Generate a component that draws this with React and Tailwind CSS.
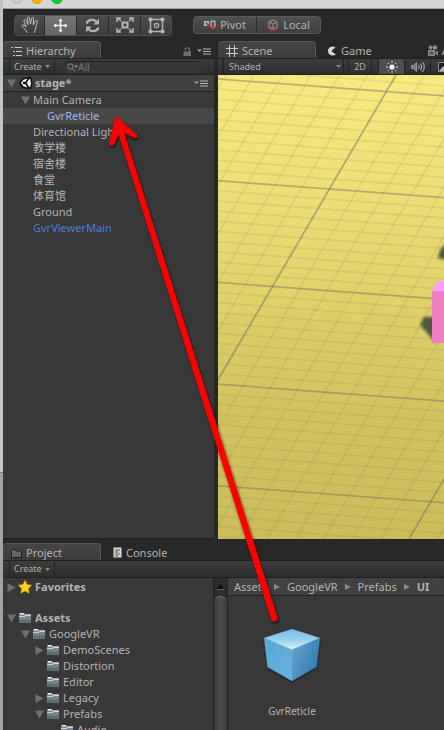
import React from "react";

function Caret({ className = "" }) {
  return (
    <svg viewBox="0 0 5 3" className={`h-[3px] w-[5px] shrink-0 fill-[#8a8a8a] ${className}`} aria-hidden="true">
      <path d="M0 0h5L2.500 3z" />
    </svg>
  );
}

function PaneMenu() {
  return (
    <button type="button" aria-label="Pane menu" className="shrink-0">
      <svg viewBox="0 0 14 7" className="h-[7px] w-[14px]" aria-hidden="true">
        <path d="M0 1.500h5L2.500 4z" fill="#a5a5a5" />
        <path d="M6 1h8M6 3.500h8M6 6h8" stroke="#b4b4b4" strokeWidth="1" />
      </svg>
    </button>
  );
}

function Fold({ open }) {
  return (
    <svg viewBox="0 0 9 9" className="h-[9px] w-[9px] shrink-0 fill-[#6f6f6f]" aria-hidden="true">
      <path d={open ? "M0 .5h9L4.500 8.500z" : "M.5 0v9l8-4.500z"} />
    </svg>
  );
}

function HandIcon() {
  return (
    <svg viewBox="0 0 18 18" className="h-[18px] w-[18px]" fill="none" stroke="#c0c0c0" strokeWidth="1" strokeLinejoin="round" strokeLinecap="round">
      <path d="M6.200 16.500C4.600 14 3.200 12.200 1.300 10.600c-.9-1.100.5-2.300 1.700-1.500l2.200 1.500L2.800 5.200c-.4-1.300 1.300-2 2-.7l2.400 4L6.300 2.300c-.1-1.400 1.900-1.600 2.200-.2l1 5.900 1-5.700c.4-1.300 2.200-1 2.100.4l-.5 6 2.600-3.900c.8-1.100 2.300-.3 1.800 1-1.200 3-1.700 5-2 7.200-.2 1.500-.9 2.400-1.100 3.500" />
    </svg>
  );
}

function MoveIcon() {
  return (
    <svg viewBox="0 0 15 15" className="h-[15px] w-[15px]" fill="#f4f4f4" stroke="#333" strokeWidth=".4">
      <path d="M7.500 0l3 3.500H8.600v2.900h2.900V4.500l3.500 3-3.500 3V8.600H8.600v2.900h1.900l-3 3.500-3-3.500h1.900V8.600H3.500v1.900L0 7.500l3.500-3v1.900h2.900V3.500H4.500z" />
    </svg>
  );
}

function RotateIcon() {
  return (
    <svg viewBox="0 0 15 15" className="h-[15px] w-[15px]">
      <g fill="none" stroke="#b4b4b4" strokeWidth="2.200">
        <path d="M1.500 5.500C3.200 1.300 8.500.8 11.500 3.800" />
        <path d="M13.500 9.500C11.800 13.700 6.500 14.200 3.500 11.200" />
      </g>
      <path d="M14 .8v5.700H8.300zM1 14.200V8.500h5.700z" fill="#b4b4b4" />
    </svg>
  );
}

function ScaleIcon() {
  return (
    <svg viewBox="0 0 18 16" className="h-4 w-[18px]" stroke="#b8b8b8" fill="none">
      <rect x="6.500" y="5.500" width="5" height="5" strokeWidth="2" />
      <path d="M1.500 1l3.500 3M16.500 1l-3.500 3M1.500 15l3.500-3M16.500 15l-3.500-3" strokeWidth="1.500" />
      <path d="M1 5V1h4M13 1h4v4M1 11v4h4M13 15h4v-4" strokeWidth="1.500" />
    </svg>
  );
}

function RectIcon() {
  return (
    <svg viewBox="0 0 17 17" className="h-[17px] w-[17px]" fill="none" stroke="#b0b0b0">
      <rect x="2.500" y="2.500" width="12" height="12" strokeWidth="1.500" />
      <g fill="#b8b8b8" stroke="none">
        <circle cx="2.500" cy="2.500" r="2.100" />
        <circle cx="14.500" cy="2.500" r="2.100" />
        <circle cx="2.500" cy="14.500" r="2.100" />
        <circle cx="14.500" cy="14.500" r="2.100" />
      </g>
      <circle cx="8.500" cy="8.500" r="2.200" strokeWidth="1.200" />
      <circle cx="8.500" cy="8.500" r=".6" fill="#b8b8b8" stroke="none" />
    </svg>
  );
}

function PivotIcon() {
  return (
    <svg viewBox="0 0 12 10" className="h-[10px] w-3 shrink-0">
      <path d="M0 1h5v5H0z" fill="#bdbdbd" />
      <path d="M1.500 2.500h2v2h-2z" fill="#555" />
      <path d="M7 1h4v6H7z" fill="#555" stroke="#d0d0d0" />
      <circle cx="4" cy="5" r="1.400" fill="#d8333f" />
      <circle cx="9" cy="7.500" r="2" fill="#d8333f" />
    </svg>
  );
}

function LocalIcon() {
  return (
    <svg viewBox="0 0 12 12" className="h-3 w-3 shrink-0" fill="none">
      <path d="M2 3l4-2 4 2v5l-4 2-4-2zM2 3l4 2 4-2M6 5v5" stroke="#8c8c8c" strokeWidth="1.200" />
      <path d="M1 8.500c1.500 3.200 8.500 3.200 10 0" stroke="#c8303b" strokeWidth="1.500" />
    </svg>
  );
}

function HierarchyIcon() {
  return (
    <svg viewBox="0 0 11 9" className="h-[9px] w-[11px] shrink-0" stroke="#c8c8c8">
      <path d="M0 .5h2M3.500 .5H11M2 4.500h2M5 4.500h6M2 8.500h2M5 8.500h6" />
    </svg>
  );
}

function GridIcon() {
  return (
    <svg viewBox="0 0 12 12" className="h-3 w-3 shrink-0" stroke="#cdcdcd">
      <path d="M3.500 0v12M8.500 0v12M0 3.500h12M0 8.500h12" />
    </svg>
  );
}

function GameIcon() {
  return (
    <svg viewBox="0 0 10 10" className="h-[10px] w-[10px] shrink-0" fill="#d6d6d6">
      <path d="M8.500 1.500A4.600 4.600 0 1 0 8.800 8.200L5 5.700V4.300z" />
    </svg>
  );
}

function CameraIcon() {
  return (
    <svg viewBox="0 0 10 12" className="h-3 w-[10px] shrink-0" fill="#8d8d8d">
      <circle cx="2.600" cy="2.600" r="2" />
      <circle cx="7" cy="2.400" r="2.200" />
      <path d="M0 5h7v6H0zM7.500 7L10 5.500v5L7.500 9z" />
      <path d="M1.500 6.500h4v3h-4z" fill="#555" />
    </svg>
  );
}

function LockIcon() {
  return (
    <svg viewBox="0 0 8 9" className="h-[9px] w-2 shrink-0">
      <path d="M2 3V2.500C2 .2 6.500.2 6.500 2.500V5" fill="none" stroke="#6f6f6f" strokeWidth="1.200" />
      <path d="M.5 4.500H8V9H.5z" fill="#6f6f6f" />
    </svg>
  );
}

function UnityIcon() {
  return (
    <svg viewBox="0 0 14 14" className="h-[14px] w-[14px] shrink-0">
      <path d="M0 7l3.500-5.200L12 .4 13.600 7 12 13.600 3.500 12.200z" fill="#141414" />
      <path d="M6.500 5.800L8.300 2.600 4.400 3.700 2 7l2.400 3.300 3.900 1.100-1.800-3.200H4.400L3.600 7l.8-1.200z" fill="#f4f4f4" />
      <path d="M7.800 7l2-3.400 1.300-.9L12 7l-.9 4.300-1.300-.9z" fill="#f4f4f4" />
    </svg>
  );
}

function Folder() {
  return (
    <svg viewBox="0 0 14 12" className="h-3 w-[14px] shrink-0">
      <path d="M.5 2.500h1V.5h5v1h6.500l.5 1v9H.5z" fill="#77868a" stroke="#262b2c" strokeWidth=".7" />
      <path d="M1.500 1h4.500v1.500H1.500z" fill="#eee" />
      <path d="M6 3h7M1 4.500h6l1-1h5" stroke="#d5dddf" fill="none" strokeWidth=".9" />
      <path d="M1 7.500h12V11H1z" fill="#5f6f73" />
    </svg>
  );
}

function TabFolder() {
  return (
    <svg viewBox="0 0 11 9" className="h-[9px] w-[11px] shrink-0">
      <path d="M.5 8.500v-7l1-1h3l1 1.500h4.500l.5.500v6z" fill="#666" stroke="#1c1c1c" />
    </svg>
  );
}

function ConsoleIcon() {
  return (
    <svg viewBox="0 0 9 11" className="h-[11px] w-[9px] shrink-0">
      <path d="M.5.5h8v10h-8z" fill="#dadada" />
      <path d="M2 3h5M2 5h3.500M2 7h5M2 9h3.500" stroke="#444" strokeWidth=".9" />
    </svg>
  );
}

function Star() {
  return (
    <svg viewBox="0 0 14 14" className="h-[14px] w-[14px] shrink-0">
      <path d="M7 .3l2 4.300 4.800.6-3.500 3.200.9 4.800L7 10.900l-4.200 2.300.9-4.800L.2 5.200 5 4.600z" fill="#ffd51c" stroke="#e0a60a" strokeWidth=".5" />
    </svg>
  );
}

function Prefab() {
  return (
    <svg viewBox="0 0 60 58" className="h-[58px] w-[60px]" aria-hidden="true">
      <defs>
        <linearGradient id="cubeTop" x1="0" y1="0" x2="0" y2="1">
          <stop offset="0" stopColor="#79bde2" />
          <stop offset=".5" stopColor="#93d0ee" />
          <stop offset="1" stopColor="#dcf4fd" />
        </linearGradient>
        <linearGradient id="cubeLeft" x1="0" y1="0" x2="1" y2="1">
          <stop offset="0" stopColor="#5aa6d2" />
          <stop offset="1" stopColor="#66b3de" />
        </linearGradient>
        <linearGradient id="cubeRight" x1="0" y1="0" x2="1" y2=".6">
          <stop offset="0" stopColor="#6ba8ce" />
          <stop offset="1" stopColor="#2f79b1" />
        </linearGradient>
        <filter id="cubeShade" x="-20%" y="-20%" width="140%" height="140%">
          <feDropShadow dx="0" dy="1" stdDeviation="1" floodColor="#000" floodOpacity=".6" />
        </filter>
      </defs>
      <g filter="url(#cubeShade)">
        <path d="M2 11L30 22v32L5.500 40z" fill="url(#cubeLeft)" />
        <path d="M58 11L30 22v32l24.500-14z" fill="url(#cubeRight)" />
        <path d="M30 2l28 9-28 11.500L2 11z" fill="url(#cubeTop)" />
      </g>
    </svg>
  );
}

const depthLines = Array.from({ length: 62 }, (_, i) => i - 6);
const crossLines = Array.from({ length: 70 }, (_, i) => i - 8);

function SceneView() {
  return (
    <svg viewBox="0 0 226 464" preserveAspectRatio="xMinYMin slice" className="h-full w-full" role="img" aria-label="Scene view">
      <defs>
        <linearGradient id="ground" x1="0" y1="0" x2="0" y2="1">
          <stop offset="0" stopColor="#f7ea7e" />
          <stop offset=".25" stopColor="#ede076" />
          <stop offset=".5" stopColor="#ded168" />
          <stop offset=".75" stopColor="#d0c35d" />
          <stop offset="1" stopColor="#cbbd59" />
        </linearGradient>
        <filter id="soft" x="-40%" y="-40%" width="180%" height="180%">
          <feGaussianBlur stdDeviation="1.800" />
        </filter>
      </defs>
      <rect width="900" height="464" fill="url(#ground)" />
      <g stroke="#707060" fill="none">
        {depthLines.map((k) => (
          <path key={k} d={`M0 ${4 + k * 10.17}l900 67.500`} strokeWidth={k % 10 ? 1.8 : 1.7} strokeOpacity={k % 10 ? 0.12 : 0.46} />
        ))}
        {crossLines.map((k) => (
          <path key={k} d={`M${178 + k * 28.4} 0l-271 464`} strokeWidth={k % 10 ? 1.6 : 1.7} strokeOpacity={k % 10 ? 0.13 : 0.5} />
        ))}
      </g>
      <g fill="#4e5a3c" filter="url(#soft)">
        <path d="M228 168l-6 7-2 8 8 2z" />
        <path d="M206 242h12v26l-16-18z" />
      </g>
      <path d="M214 216l5-10h25v10z" fill="#fc9ff4" />
      <path d="M214 216h30v52h-30z" fill="#ef7fc1" />
    </svg>
  );
}

const tools = [
  { name: "Hand", Icon: HandIcon },
  { name: "Move", Icon: MoveIcon, active: true },
  { name: "Rotate", Icon: RotateIcon },
  { name: "Scale", Icon: ScaleIcon },
  { name: "Rect", Icon: RectIcon },
];

const objects = ["Directional Light", "教学楼", "宿舍楼", "食堂", "体育馆", "Ground"];

const folders = [
  { name: "GoogleVR", pad: "pl-[18px]", fold: "open" },
  { name: "DemoScenes", pad: "pl-8", fold: "closed" },
  { name: "Distortion", pad: "pl-8" },
  { name: "Editor", pad: "pl-8" },
  { name: "Legacy", pad: "pl-8", fold: "closed" },
  { name: "Prefabs", pad: "pl-8", fold: "open" },
  { name: "Audio", pad: "pl-[46px]" },
];

function TreeRow({ pad, fold, children }) {
  return (
    <li className={`flex h-4 shrink-0 items-center gap-0.5 ${pad}`}>
      {fold ? <Fold open={fold === "open"} /> : <span className="w-[9px]" />}
      {children}
    </li>
  );
}

function Tab({ active, className = "", children }) {
  return (
    <button
      type="button"
      role="tab"
      aria-selected={!!active}
      className={`flex h-[17px] shrink-0 items-center gap-1 pt-0.5 text-[11px] leading-4 ${
        active ? "w-[98px] rounded-t border-t border-r border-[#575757] bg-linear-to-b from-[#454545] to-[#3c3c3c] pl-2" : ""
      } ${className}`}
    >
      {children}
    </button>
  );
}

function CreateButton() {
  return (
    <button type="button" className="ml-1.5 flex h-full w-[46px] shrink-0 items-center justify-between border-x border-[#222] px-1 text-[9px]">
      Create
      <Caret />
    </button>
  );
}

const strip = "flex shrink-0 items-center border-y border-[#202020] bg-linear-to-b from-[#3d3d3d] to-[#2d2d2d]";

function DragArrow() {
  return (
    <svg viewBox="0 0 444 730" className="pointer-events-none absolute top-0 left-0 h-[730px] w-[444px]" aria-hidden="true">
      <defs>
        <filter id="arrowShade" filterUnits="userSpaceOnUse" x="80" y="90" width="230" height="560">
          <feDropShadow dx="1" dy="2" stdDeviation="1.500" floodColor="#000" floodOpacity=".7" />
        </filter>
      </defs>
      <path
        filter="url(#arrowShade)"
        fill="#ff0000"
        d="M115.300 117.500Q116.500 116 118.500 118L136.500 134.500Q138.500 138 134.500 138L124 132.500L277.400 617.500A3.300 3.300 0 0 1 271.400 620L118.500 134L114.500 143.500Q111.500 147.500 109.200 143.500Z"
      />
    </svg>
  );
}

export default function App() {
  return (
    <div className="relative flex h-screen overflow-hidden bg-[#282828] font-['Noto_Sans','Noto_Sans_CJK_SC',sans-serif] text-[11px] leading-4 text-[#b4b4b4]">
      <div className="flex w-[3px] shrink-0 flex-col">
        <div className="h-[473px] border-b border-[#777] bg-[#bfc5c3]" />
        <div className="flex-1 bg-[#a3a3a3]" />
      </div>
      <div className="flex min-w-0 flex-1 flex-col">
        <header>
          <div className="flex h-[9px] items-start gap-2 overflow-hidden border-b border-[#a09ea0] bg-[#d7d4d7] pl-2">
            <span className="-mt-2 h-3 w-3 rounded-full border border-[#b5b2b5] bg-[#cecbce]" />
            <span className="-mt-2 h-3 w-3 rounded-full border border-[#e09a10] bg-[#fdb405]" />
            <span className="-mt-2 h-3 w-3 rounded-full border border-[#12b428] bg-[#08cf37]" />
          </div>
          <div className="flex h-8 items-center gap-[21px] pl-[11px]">
            <div className="flex h-[21px] overflow-hidden rounded border border-[#505050]">
              {tools.map(({ name, Icon, active }) => (
                <button
                  key={name}
                  type="button"
                  aria-label={name}
                  className={`flex w-8 items-center justify-center border-r border-[#2c2c2c] bg-linear-to-b first:w-[30px] last:w-[30px] last:border-r-0 ${
                    active ? "from-[#757575] to-[#666]" : "from-[#4c4c4c] to-[#3c3c3c]"
                  }`}
                >
                  <Icon />
                </button>
              ))}
            </div>
            <div className="flex h-[18px] overflow-hidden rounded border border-[#5a5a5a] bg-linear-to-b from-[#505050] to-[#3e3e3e]">
              <button type="button" className="flex w-[63px] items-center justify-center gap-1 border-r border-[#2c2c2c]">
                <PivotIcon />
                Pivot
              </button>
              <button type="button" className="flex w-[63px] items-center justify-center gap-1">
                <LocalIcon />
                Local
              </button>
            </div>
          </div>
        </header>

        <div className="flex min-h-0 flex-1">
          <section className="mr-1 flex w-[211px] shrink-0 flex-col border-b border-[#1f1f1f]">
            <div className="flex items-center" role="tablist">
              <Tab active>
                <HierarchyIcon />
                Hierarchy
              </Tab>
              <div className="ml-auto flex items-center gap-1.5 pt-1 pr-[3px]">
                <LockIcon />
                <PaneMenu />
              </div>
            </div>
            <div className={`${strip} h-[17px]`}>
              <CreateButton />
              <label className="mr-3 ml-2 flex h-3 min-w-0 flex-1 items-center rounded-full border-t border-[#202020] bg-[#373737] pl-1">
                <svg viewBox="0 0 11 9" className="h-[9px] w-[11px] shrink-0" fill="none" stroke="#8b8b8b">
                  <circle cx="3.500" cy="3.500" r="2.600" />
                  <path d="M5.500 5.500L8 8.500" />
                  <path d="M7 2.500h4L9 5z" fill="#8b8b8b" stroke="none" />
                </svg>
                <input type="search" aria-label="Search hierarchy" placeholder="All" className="h-3 w-full min-w-0 bg-transparent text-[10px] leading-3 outline-none placeholder:text-[#777]" />
              </label>
            </div>
            <div className="flex h-[17px] shrink-0 items-center border-b border-[#222] bg-[#404040] pr-1.5 pl-1">
              <Fold open />
              <span className="ml-[3px] flex items-center gap-0.5 font-bold">
                <UnityIcon />
                stage*
              </span>
              <span className="ml-auto flex">
                <PaneMenu />
              </span>
            </div>
            <ul className="min-h-0 flex-1 overflow-hidden bg-[#383838]">
              <TreeRow pad="pl-[18px]" fold="open">
                <span className="pl-px">Main Camera</span>
              </TreeRow>
              <li className="flex h-4 items-center bg-[#484848] pl-11 text-[#a0b4f4]">GvrReticle</li>
              {objects.map((name) => (
                <li key={name} className="flex h-4 items-center pl-[30px] whitespace-nowrap">
                  {name}
                </li>
              ))}
              <li className="flex h-4 items-center pl-[30px] text-[#4b7fd8]">GvrViewerMain</li>
            </ul>
          </section>

          <section className="flex min-w-0 flex-1 flex-col">
            <div className="flex overflow-hidden" role="tablist">
              <Tab active>
                <GridIcon />
                Scene
              </Tab>
              <Tab className="ml-[11px]">
                <GameIcon />
                Game
              </Tab>
              <Tab className="ml-14">
                <CameraIcon />
                A
              </Tab>
            </div>
            <div className={`${strip} h-[17px] overflow-hidden text-[9px]`}>
              <div className="ml-[5px] flex h-full w-[121px] shrink-0 items-center border-x border-[#222] pr-0.5">
                <select aria-label="Draw mode" className="w-full appearance-none bg-transparent pl-[5px] text-[9px] outline-none">
                  <option>Shaded</option>
                </select>
                <Caret />
              </div>
              <button type="button" className="ml-1 flex h-full w-6 shrink-0 items-center justify-center border-x border-[#222]">
                2D
              </button>
              <button type="button" aria-label="Scene lighting" className="ml-1.5 flex h-full w-[27px] shrink-0 items-center justify-center border-x border-[#222] bg-[#4e4e4e]">
                <svg viewBox="0 0 12 12" className="h-3 w-3">
                  <circle cx="6" cy="6" r="2.600" fill="#f2f2f2" />
                  <path d="M6 0v2M6 10v2M0 6h2M10 6h2M1.800 1.800l1.300 1.300M8.900 8.900l1.300 1.300M10.200 1.800L8.900 3.100M3.100 8.900l-1.300 1.300" stroke="#e0e0e0" />
                </svg>
              </button>
              <button type="button" aria-label="Scene audio" className="flex h-full w-[26px] shrink-0 items-center justify-center border-r border-[#222]">
                <svg viewBox="0 0 14 12" className="h-3 w-[14px]" fill="none" stroke="#bdbdbd">
                  <path d="M.5 4.500h2l3-3v9l-3-3h-2z" fill="#777" stroke="#999" />
                  <path d="M7.500 4q1.500 2 0 4M9.500 2.500q2.500 3.500 0 7M11.500 1q3.500 5 0 10" />
                </svg>
              </button>
              <button type="button" aria-label="Scene effects" className="flex h-full w-[26px] shrink-0 items-center justify-center">
                <svg viewBox="0 0 13 10" className="h-[10px] w-[13px]">
                  <path d="M.5.5h12v9H.5z" fill="#1a1a1a" stroke="#909090" />
                  <path d="M1 9l4-5 2.500 3L9 5.500 12 9z" fill="#b0b0b0" />
                </svg>
              </button>
            </div>
            <div className="min-h-0 flex-1 overflow-hidden">
              <SceneView />
            </div>
          </section>
        </div>

        <section className="mt-1 flex h-[187px] shrink-0 flex-col">
          <div className="flex" role="tablist">
            <Tab active>
              <TabFolder />
              Project
            </Tab>
            <Tab className="ml-3">
              <ConsoleIcon />
              Console
            </Tab>
          </div>
          <div className={`${strip} h-[18px]`}>
            <CreateButton />
          </div>
          <div className="flex min-h-0 flex-1 bg-[#383838]">
            <ul className="w-[210px] shrink-0 overflow-hidden pt-px">
              <TreeRow pad="pl-1" fold="closed">
                <Star />
                <span className="pl-px font-bold">Favorites</span>
              </TreeRow>
              <li className="h-[15px]" aria-hidden="true" />
              <TreeRow pad="pl-1" fold="open">
                <Folder />
                <span className="pl-px font-bold">Assets</span>
              </TreeRow>
              {folders.map(({ name, pad, fold }) => (
                <TreeRow key={name} pad={pad} fold={fold}>
                  <Folder />
                  <span className="pl-px">{name}</span>
                </TreeRow>
              ))}
            </ul>
            <div className="flex w-[15px] shrink-0 flex-col items-center border-x border-[#222] bg-[#2c2c2c]">
              <svg viewBox="0 0 7 6" className="mt-1.5 mb-1.5 h-1.5 w-[7px] shrink-0" aria-hidden="true">
                <path d="M3.500 0L7 5H0z" fill="#0c0c0c" />
                <path d="M0 5.500h7" stroke="#666" />
              </svg>
              <div className="w-full flex-1 rounded-t-full border-t border-[#777] bg-linear-to-r from-[#3a3a3a] via-[#4b4b4b] to-[#3d3d3d]" />
            </div>
            <div className="min-w-0 flex-1">
              <nav className="flex h-[18px] items-center gap-[7px] border-b border-[#222] bg-[#404040] pl-1.5" aria-label="Folder path">
                {["Assets", "GoogleVR", "Prefabs"].map((name) => (
                  <React.Fragment key={name}>
                    <a href="#">{name}</a>
                    <svg viewBox="0 0 6 6" className="h-1.5 w-1.5 shrink-0 fill-[#8b8b8b]" aria-hidden="true">
                      <path d="M0 0l6 3-6 3z" />
                    </svg>
                  </React.Fragment>
                ))}
                <span className="font-bold">UI</span>
              </nav>
              <figure className="mt-[31px] ml-8 flex w-16 flex-col items-center gap-[18px]">
                <Prefab />
                <figcaption className="text-[10px]">GvrReticle</figcaption>
              </figure>
            </div>
          </div>
        </section>
      </div>
      <DragArrow />
    </div>
  );
}
